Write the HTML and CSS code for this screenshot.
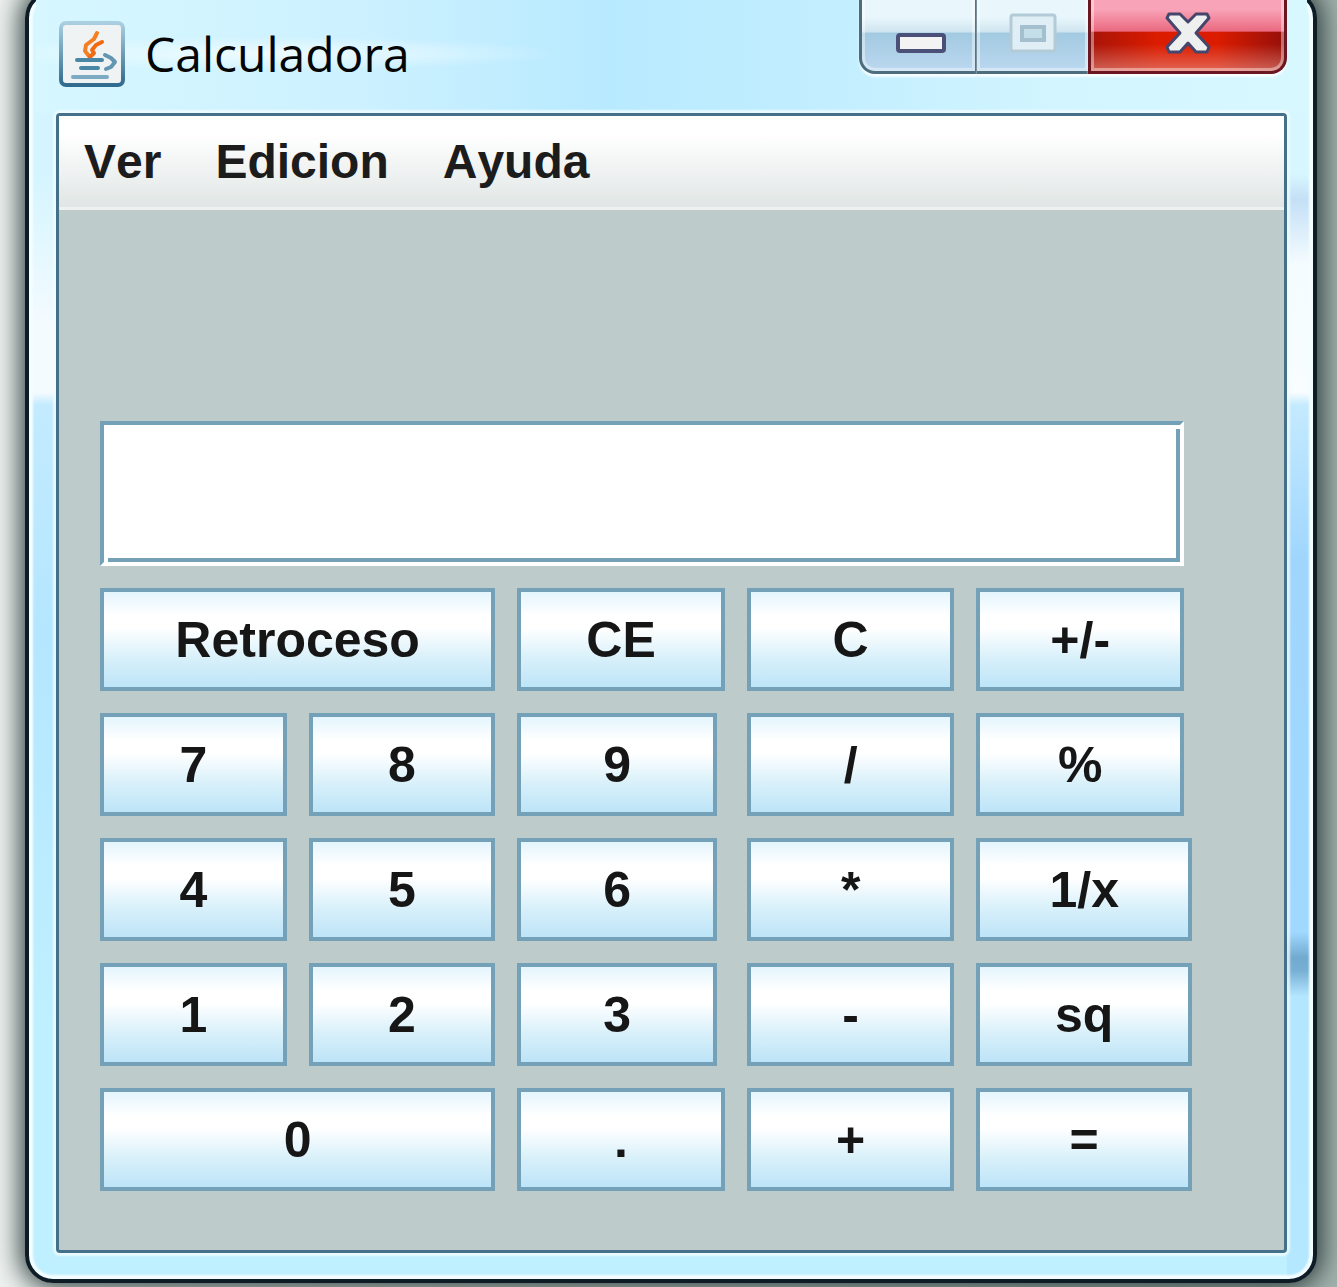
FILE: index.html
```html
<!DOCTYPE html>
<html lang="es">
<head>
<meta charset="utf-8">
<meta name="viewport" content="width=device-width, initial-scale=1">
<title>Calculadora</title>
<link rel="stylesheet" href="styles.css">
</head>
<body>
<main class="window">
  <header class="titlebar">
    <svg class="app-icon" viewBox="0 0 66 66" aria-hidden="true">
      <defs>
        <linearGradient id="tile" x1="0" y1="0" x2="0" y2="1">
          <stop offset="0" stop-color="#a9cfe0"/>
          <stop offset="1" stop-color="#316b8e"/>
        </linearGradient>
      </defs>
      <rect x="2" y="2" width="62" height="62" rx="5" fill="#f0f3f4" stroke="url(#tile)" stroke-width="4"/>
      <g fill="none" stroke-linecap="round" stroke-linejoin="round">
        <path d="M38 12l-3 6-8 6-1 6 4 5" stroke="#f58024" stroke-width="4"/>
        <path d="M43 21l-6 3-4 5 2 3-4 4" stroke="#f26a10" stroke-width="4"/>
        <path d="M18 39h25M22 47h17" stroke="#4a86a6" stroke-width="4"/>
        <path d="M46 34l6 3 4 4-4 5-5 2" stroke="#6396b2" stroke-width="4"/>
        <path d="M14 56h34" stroke="#7caac2" stroke-width="4"/>
      </g>
    </svg>
    <h1 class="title">Calculadora</h1>
    <div class="caption">
      <button class="cap cap-min" type="button" aria-label="Minimizar">
        <svg width="50" height="20" viewBox="0 0 50 20"><rect x="2" y="2" width="46" height="16" rx="2" fill="#f3f3f3" stroke="#4a5078" stroke-width="4"/></svg>
      </button>
      <button class="cap cap-max" type="button" aria-label="Maximizar" disabled>
        <svg width="48" height="40" viewBox="0 0 48 40">
          <rect x="2" y="2" width="44" height="36" rx="2" fill="#e0eff6" stroke="#b2cbd7" stroke-width="3"/>
          <rect x="13" y="14" width="22" height="13" fill="#c5dfea" stroke="#a4bfcd" stroke-width="4"/>
        </svg>
      </button>
      <button class="cap cap-close" type="button" aria-label="Cerrar">
        <svg width="46" height="42" viewBox="0 0 46 42"><path d="M4 2h11l8 8 8-8h11l2 4-13 15 13 14-2 5H31l-8-9-8 9H4l-2-5 13-14L2 6z" fill="#eef0ef" stroke="#46466c" stroke-width="3" stroke-linejoin="round"/></svg>
      </button>
    </div>
  </header>
  <section class="client">
    <nav class="menubar">
      <button class="menu" type="button">Ver</button>
      <button class="menu" type="button">Edicion</button>
      <button class="menu" type="button">Ayuda</button>
    </nav>
    <div class="keypad">
      <input class="display inset" type="text" aria-label="Resultado">
      <button class="key wide" type="button">Retroceso</button>
      <button class="key" type="button">CE</button>
      <button class="key" type="button">C</button>
      <button class="key inset" type="button">+/-</button>
      <button class="key" type="button">7</button>
      <button class="key" type="button">8</button>
      <button class="key inset" type="button">9</button>
      <button class="key" type="button">/</button>
      <button class="key inset" type="button">%</button>
      <button class="key" type="button">4</button>
      <button class="key" type="button">5</button>
      <button class="key inset" type="button">6</button>
      <button class="key" type="button">*</button>
      <button class="key" type="button">1/x</button>
      <button class="key" type="button">1</button>
      <button class="key" type="button">2</button>
      <button class="key inset" type="button">3</button>
      <button class="key" type="button">-</button>
      <button class="key" type="button">sq</button>
      <button class="key wide" type="button">0</button>
      <button class="key" type="button">.</button>
      <button class="key" type="button">+</button>
      <button class="key" type="button">=</button>
    </div>
  </section>
</main>
</body>
</html>
```
FILE: styles.css
```css
* { box-sizing: border-box; }

body {
  display: flow-root;
  margin: 0;
  min-height: 100vh;
  overflow: hidden;
  background: linear-gradient(to right, #eef2f0, #dfe6e3 10%, #a3b2ad);
  font-family: "Liberation Sans", Arial, sans-serif;
}

button, input {
  margin: 0;
  font: inherit;
}

/* the frame starts just above the visible area */
.window {
  margin: -10px 20px 4px 25px;
  padding: 0 26px 26px 27px;
  border: 4px solid #0e1c26;
  border-radius: 28px;
  box-shadow: 0 0 26px 5px rgba(20, 38, 38, .85), inset 0 0 2px 4px #f4fdff;
  background:
    linear-gradient(#d6f7ff 14%, #c4e0f6 16%, #f4fcff 21%, #f8fdff 31%, #c4eaff 32%, #a0d6fd 44%, #a0d8ff 73%, #72a9cf 75%, #78afd4 76%, #b4e6ff 78%, #b4e8ff) right / 26px 100% no-repeat,
    linear-gradient(#d4f5ff 14%, #f4fbff 26%, #f4fbff 31%, #c2ebff 32%, #b4e6ff 50%, #bff0ff 80%);
}

.titlebar {
  display: flex;
  align-items: center;
  gap: 20px;
  height: 119px;
  margin: 0 -20px;
  padding: 0 20px 0 23px;
  background:
    radial-gradient(ellipse at 18% 50%, #eefbff, rgba(238, 251, 255, 0) 20%),
    linear-gradient(to right, #d6f7ff, #cdf1ff 25%, #b8eaff 45%, #c2eeff 62%, #d2f5ff 80%, #d8f8ff);
}

.app-icon {
  width: 66px;
  height: 66px;
}

.title {
  margin: 0;
  color: #050505;
  font: 400 48px/64px "Open Sans", "Noto Sans", sans-serif;
}

.caption {
  display: flex;
  align-self: flex-start;
  height: 80px;
  margin-left: auto;
}

.cap {
  display: flex;
  align-items: center;
  justify-content: center;
  padding: 0;
  border: 3px solid #4d6c7c;
  border-top: 0;
  box-shadow: inset 0 0 0 3px rgba(255, 255, 255, .4), 0 3px 2px rgba(255, 255, 255, .8);
  background: linear-gradient(#e9f7fd 30%, #cfe5ef 49%, #a2cae1 51%, #bbd8f0);
}

.cap-min {
  width: 118px;
  padding-top: 20px;
  padding-left: 4px;
  border-right-width: 2px;
  border-bottom-left-radius: 16px;
}

.cap-max {
  width: 111px;
  border-left: 0;
  border-right: 0;
}

.cap-close {
  width: 199px;
  border-color: #6b1620;
  border-bottom-right-radius: 16px;
  background:
    linear-gradient(rgba(255, 255, 255, 0) 65%, rgba(230, 150, 140, .6)),
    linear-gradient(#f9a3b8 20%, #ea6a80 48%, rgba(0, 0, 0, 0) 50%),
    linear-gradient(to right, #a81408, #dc1c00 35%, #dc1c00 65%, #96100a);
}

.client {
  border: 3px solid #45708a;
  border-radius: 4px;
  box-shadow: 0 0 2px 3px rgba(240, 252, 255, .8);
  background: #bdcbca;
}

.menubar {
  display: flex;
  gap: 54px;
  height: 94px;
  padding: 0 25px;
  border-bottom: 3px solid #eef1f0;
  background: linear-gradient(#fff 20%, #e0e6e5);
}

.menu {
  padding: 0;
  border: 0;
  background: none;
  color: #1c1c1c;
  font-size: 48px;
  font-weight: 700;
  font-kerning: none;
}

.keypad {
  display: grid;
  grid-template-columns: 187fr 187fr 208fr 208fr 216fr;
  gap: 22px;
  padding: 211px 92px 59px 41px;
}

.key {
  height: 103px;
  padding: 0;
  border: 4px solid #74a1b7;
  background: linear-gradient(#e4f5fd, #fff 25%, #fff 38%, #d8f0fa 70%, #bde4f8);
  color: #161616;
  font-size: 50px;
  font-weight: 700;
}

.wide { grid-column: span 2; }

/* cells that stop short of their column's edge */
.inset { margin-right: 8px; }

.display {
  grid-column: 1 / -1;
  height: 145px;
  min-width: 0;
  padding: 0 20px;
  border: 4px solid #fff;
  border-top-color: #74a1b7;
  border-left-color: #74a1b7;
  border-radius: 0;
  outline: 0;
  background:
    linear-gradient(#74a1b7, #74a1b7) right bottom / calc(100% - 4px) 4px no-repeat,
    linear-gradient(#74a1b7, #74a1b7) right bottom / 4px calc(100% - 4px) no-repeat,
    #fff;
  font-size: 50px;
  font-weight: 700;
  text-align: right;
}
```
